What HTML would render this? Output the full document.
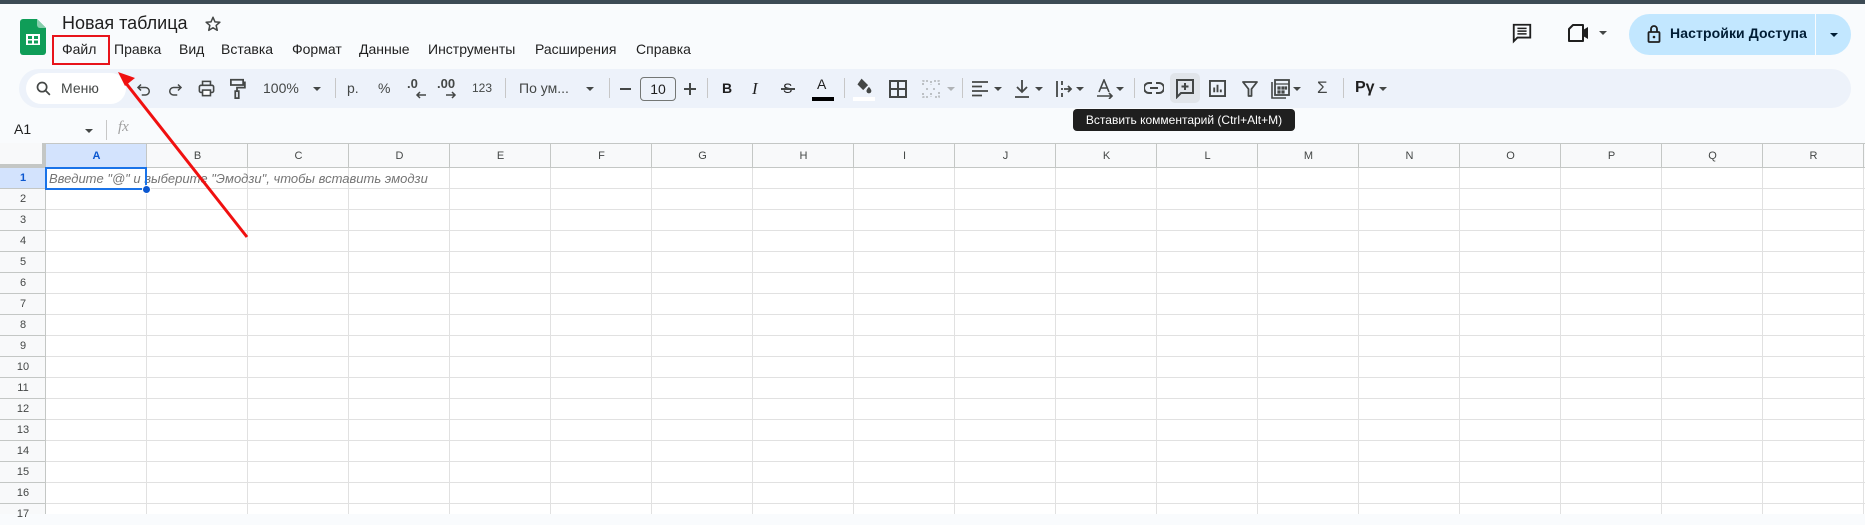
<!DOCTYPE html>
<html><head><meta charset="utf-8">
<style>
*{margin:0;padding:0;box-sizing:border-box}
body{width:1865px;height:514px;overflow:hidden;background:#f9fbfd;font-family:"Liberation Sans",Arial,sans-serif;color:#1f1f1f;position:relative}
.a{position:absolute}
.t{position:absolute;white-space:nowrap}
.menu{font-size:14px;top:41px;color:#1f1f1f}
.tb{font-size:14px;color:#444746}
svg.i{position:absolute}
.car{position:absolute;width:0;height:0;border-left:4px solid transparent;border-right:4px solid transparent;border-top:4px solid #444746}
.sep{position:absolute;width:1px;height:20px;top:78px;background:#c7c7c7}
.ch{position:absolute;top:144px;height:24px;line-height:24px;width:101px;text-align:center;font-size:11px;color:#444746}
.rh{position:absolute;left:0;width:46px;height:21px;line-height:21px;text-align:center;font-size:11px;color:#444746}
</style></head><body>
<div class="a" style="left:0;top:0;width:1865px;height:4px;background:#3d4b55"></div>

<!-- logo -->
<svg class="i" style="left:20px;top:19px" width="26" height="36" viewBox="0 0 26 36">
<path d="M3 0h14l9 9v24a3 3 0 0 1-3 3H3a3 3 0 0 1-3-3V3a3 3 0 0 1 3-3z" fill="#0f9d58"/>
<path d="M17 0l9 9h-6a3 3 0 0 1-3-3z" fill="#87ceac"/>
<rect x="6" y="15" width="14" height="11" fill="#fff"/>
<rect x="8" y="17" width="4" height="3" fill="#0f9d58"/><rect x="14" y="17" width="4" height="3" fill="#0f9d58"/>
<rect x="8" y="21.5" width="4" height="3" fill="#0f9d58"/><rect x="14" y="21.5" width="4" height="3" fill="#0f9d58"/>
</svg>
<div class="t" style="left:62px;top:13px;font-size:18px;color:#1f1f1f">Новая таблица</div>
<svg class="i" style="left:204px;top:15px" width="18" height="18" viewBox="0 0 24 24"><path d="M12 3l2.6 6.1 6.6.5-5 4.3 1.5 6.5L12 17l-5.7 3.4 1.5-6.5-5-4.3 6.6-.5z" fill="none" stroke="#444746" stroke-width="2" stroke-linejoin="round"/></svg>

<div class="t menu" style="left:62px">Файл</div>
<div class="t menu" style="left:114px">Правка</div>
<div class="t menu" style="left:179px">Вид</div>
<div class="t menu" style="left:221px">Вставка</div>
<div class="t menu" style="left:292px">Формат</div>
<div class="t menu" style="left:359px">Данные</div>
<div class="t menu" style="left:428px">Инструменты</div>
<div class="t menu" style="left:535px">Расширения</div>
<div class="t menu" style="left:636px">Справка</div>
<div class="a" style="left:52px;top:35px;width:58px;height:30px;border:2px solid #e8141b"></div>

<!-- right top -->
<svg class="i" style="left:1511px;top:22px" width="22" height="22" viewBox="0 0 24 24"><path d="M3 3h18v14H7l-4 4z" fill="none" stroke="#1f1f1f" stroke-width="2"/><path d="M7 7h10M7 10h10M7 13h10" stroke="#1f1f1f" stroke-width="1.6"/></svg>
<svg class="i" style="left:1567px;top:23px" width="24" height="20" viewBox="0 0 24 20"><path d="M6 2h10v16H2V6z" fill="none" stroke="#1f1f1f" stroke-width="2" stroke-linejoin="round"/><path d="M16 7l5-3v12l-5-3z" fill="#1f1f1f"/></svg>
<div class="car" style="left:1599px;top:31px"></div>
<div class="a" style="left:1629px;top:14px;width:222px;height:41px;border-radius:21px;background:#c2e7ff"></div>
<div class="a" style="left:1815px;top:14px;width:1px;height:41px;background:#f9fbfd"></div>
<svg class="i" style="left:1647px;top:24px" width="14" height="20" viewBox="0 0 14 20"><rect x="1.5" y="8" width="11" height="10" rx="1" fill="none" stroke="#1f1f1f" stroke-width="1.8"/><path d="M4 8V5a3 3 0 0 1 6 0v3" fill="none" stroke="#1f1f1f" stroke-width="1.8"/><circle cx="7" cy="13" r="1.3" fill="#1f1f1f"/></svg>
<div class="t" style="left:1670px;top:25px;font-size:14px;font-weight:bold;color:#001d35;letter-spacing:0.1px">Настройки Доступа</div>
<div class="car" style="left:1830px;top:33px;border-top-color:#001d35"></div>

<!-- toolbar -->
<div class="a" style="left:19px;top:69px;width:1832px;height:39px;border-radius:20px;background:#edf2fa"></div>
<div class="a" style="left:26px;top:73px;width:100px;height:31px;border-radius:16px;background:#fff"></div>
<svg class="i" style="left:35px;top:80px" width="17" height="17" viewBox="0 0 24 24"><circle cx="10" cy="10" r="6.5" fill="none" stroke="#444746" stroke-width="2.4"/><path d="M15 15l6 6" stroke="#444746" stroke-width="2.4"/></svg>
<div class="t tb" style="left:61px;top:80px">Меню</div>
<svg class="i" style="left:135px;top:80px" width="18" height="18" viewBox="0 0 24 24"><path d="M8 6L4 10l4 4" fill="none" stroke="#444746" stroke-width="2"/><path d="M4 10h10a5 5 0 0 1 0 10H9" fill="none" stroke="#444746" stroke-width="2"/></svg>
<svg class="i" style="left:166px;top:80px" width="18" height="18" viewBox="0 0 24 24"><path d="M16 6l4 4-4 4" fill="none" stroke="#444746" stroke-width="2"/><path d="M20 10H10a5 5 0 0 0 0 10h5" fill="none" stroke="#444746" stroke-width="2"/></svg>
<svg class="i" style="left:197px;top:79px" width="19" height="19" viewBox="0 0 24 24"><path d="M7 8V3h10v5" fill="none" stroke="#444746" stroke-width="2"/><rect x="3" y="8" width="18" height="9" rx="2" fill="none" stroke="#444746" stroke-width="2"/><rect x="7" y="14" width="10" height="7" fill="#fff" stroke="#444746" stroke-width="2"/></svg>
<svg class="i" style="left:228px;top:78px" width="18" height="21" viewBox="0 0 20 24"><rect x="3" y="2" width="14" height="6" fill="none" stroke="#444746" stroke-width="2"/><path d="M17 5h2v6h-9v4" fill="none" stroke="#444746" stroke-width="2"/><rect x="8" y="15" width="4" height="8" fill="none" stroke="#444746" stroke-width="2"/></svg>
<div class="t tb" style="left:263px;top:80px">100%</div>
<div class="car" style="left:313px;top:87px"></div>
<div class="sep" style="left:335px"></div>
<div class="t tb" style="left:347px;top:80px">р.</div>
<div class="t tb" style="left:378px;top:80px">%</div>
<div class="t tb" style="left:407px;top:76px;font-size:13px;font-weight:bold">.0</div>
<svg class="i" style="left:415px;top:91px" width="12" height="8" viewBox="0 0 12 8"><path d="M11 4H2M5 1L2 4l3 3" fill="none" stroke="#444746" stroke-width="1.5"/></svg>
<div class="t tb" style="left:437px;top:76px;font-size:13px;font-weight:bold">.00</div>
<svg class="i" style="left:445px;top:91px" width="12" height="8" viewBox="0 0 12 8"><path d="M1 4h9M7 1l3 3-3 3" fill="none" stroke="#444746" stroke-width="1.5"/></svg>
<div class="t tb" style="left:472px;top:81px;font-size:12px">123</div>
<div class="sep" style="left:505px"></div>
<div class="t tb" style="left:519px;top:80px">По ум...</div>
<div class="car" style="left:586px;top:87px"></div>
<div class="sep" style="left:609px"></div>
<div class="a" style="left:620px;top:88px;width:11px;height:2px;background:#444746"></div>
<div class="a" style="left:640px;top:77px;width:36px;height:24px;border:1px solid #747775;border-radius:4px;font-size:14px;text-align:center;line-height:22px;color:#1f1f1f">10</div>
<div class="a" style="left:684px;top:88px;width:12px;height:2px;background:#444746"></div>
<div class="a" style="left:689px;top:83px;width:2px;height:12px;background:#444746"></div>
<div class="sep" style="left:707px"></div>
<div class="t tb" style="left:722px;top:80px;font-weight:bold;color:#1f1f1f">B</div>
<div class="t tb" style="left:752px;top:79px;font-style:italic;font-family:'Liberation Serif',serif;font-size:17px;color:#1f1f1f">I</div>
<div class="t tb" style="left:783px;top:80px;color:#1f1f1f">S</div>
<div class="a" style="left:781px;top:88px;width:14px;height:1.5px;background:#444746"></div>
<div class="t tb" style="left:817px;top:76px;font-size:14px;color:#1f1f1f">A</div>
<div class="a" style="left:812px;top:97px;width:22px;height:4px;background:#000"></div>
<div class="sep" style="left:844px"></div>
<svg class="i" style="left:854px;top:77px" width="20" height="18" viewBox="0 0 24 22"><path d="M9 2l8 8-6 6-7-7z" fill="#444746"/><path d="M18 12s3 3 3 5a3 3 0 0 1-6 0c0-2 3-5 3-5z" fill="#444746"/></svg>
<div class="a" style="left:853px;top:97px;width:22px;height:4px;background:#fff"></div>
<svg class="i" style="left:889px;top:80px" width="18" height="18" viewBox="0 0 18 18"><path d="M1 1h16v16H1zM9 1v16M1 9h16" fill="none" stroke="#444746" stroke-width="2"/></svg>
<svg class="i" style="left:922px;top:80px" width="18" height="18" viewBox="0 0 18 18"><path d="M1 5V1h5M12 1h5v4M17 12v5h-5M6 17H1v-5M9 1v4M9 13v4M4 9h3M11 9h3" fill="none" stroke="#b0b3b6" stroke-width="1.6" stroke-dasharray="2 1.5"/></svg>
<div class="car" style="left:947px;top:87px;border-top-color:#b0b3b6"></div>
<div class="sep" style="left:962px"></div>
<svg class="i" style="left:972px;top:81px" width="16" height="16" viewBox="0 0 16 16"><path d="M0 1h16M0 5.5h10M0 10h16M0 14.5h10" stroke="#444746" stroke-width="1.7"/></svg>
<div class="car" style="left:994px;top:87px"></div>
<svg class="i" style="left:1014px;top:79px" width="16" height="20" viewBox="0 0 16 20"><path d="M8 1v12M3 8l5 5 5-5M1 18h14" fill="none" stroke="#444746" stroke-width="1.8"/></svg>
<div class="car" style="left:1035px;top:87px"></div>
<svg class="i" style="left:1055px;top:80px" width="18" height="18" viewBox="0 0 18 18"><path d="M2 1v16M7 1v4M7 8v2M7 13v4M9 9h7M13 6l3 3-3 3" fill="none" stroke="#444746" stroke-width="1.8"/></svg>
<div class="car" style="left:1076px;top:87px"></div>
<svg class="i" style="left:1096px;top:79px" width="18" height="20" viewBox="0 0 18 20"><path d="M3 13L8 1l5 12M5 9h6M1 17h14M13 14l3 3-3 3" fill="none" stroke="#444746" stroke-width="1.6"/></svg>
<div class="car" style="left:1116px;top:87px"></div>
<div class="sep" style="left:1134px"></div>
<svg class="i" style="left:1144px;top:82px" width="20" height="12" viewBox="0 0 20 12"><path d="M8 1H5a5 5 0 0 0 0 10h3M12 1h3a5 5 0 0 1 0 10h-3M6 6h8" fill="none" stroke="#444746" stroke-width="2"/></svg>
<div class="a" style="left:1170px;top:73px;width:30px;height:30px;border-radius:5px;background:#e1e5ea"></div>
<svg class="i" style="left:1176px;top:79px" width="18" height="20" viewBox="0 0 18 20"><path d="M1 1h16v13H5l-4 4z" fill="none" stroke="#444746" stroke-width="2"/><path d="M9 4v7M5.5 7.5h7" stroke="#444746" stroke-width="2"/></svg>
<svg class="i" style="left:1209px;top:80px" width="17" height="17" viewBox="0 0 18 18"><rect x="1" y="1" width="16" height="16" fill="none" stroke="#444746" stroke-width="2"/><path d="M5.5 13V8M9 13V5M12.5 13v-3" stroke="#444746" stroke-width="2"/></svg>
<svg class="i" style="left:1242px;top:81px" width="16" height="16" viewBox="0 0 16 16"><path d="M1 1h14l-5.5 7v7h-3V8z" fill="none" stroke="#444746" stroke-width="1.8" stroke-linejoin="round"/></svg>
<svg class="i" style="left:1270px;top:79px" width="20" height="20" viewBox="0 0 20 20"><path d="M2 3v16h14" fill="none" stroke="#444746" stroke-width="1.6"/><rect x="5" y="1" width="14" height="15" fill="none" stroke="#444746" stroke-width="1.8"/><path d="M5 5h14M8 8h2v2H8zM12 8h2v2h-2zM15.5 8h1v2h-1zM8 12h2v2H8zM12 12h2v2h-2z" stroke="#444746" stroke-width="1.2" fill="#444746"/></svg>
<div class="car" style="left:1293px;top:87px"></div>
<div class="t tb" style="left:1317px;top:78px;font-size:17px">Σ</div>
<div class="sep" style="left:1343px"></div>
<div class="t tb" style="left:1355px;top:79px;font-size:16px;font-weight:bold;color:#1f1f1f">Pγ</div>
<div class="car" style="left:1379px;top:87px"></div>

<!-- tooltip -->
<div class="a" style="left:1073px;top:109px;width:222px;height:22px;border-radius:4px;background:#1f1f1f;color:#fff;font-size:12px;line-height:22px;text-align:center;white-space:nowrap">Вставить комментарий (Ctrl+Alt+M)</div>

<!-- name box / formula -->
<div class="t" style="left:14px;top:121px;font-size:14px;color:#1f1f1f">A1</div>
<div class="car" style="left:85px;top:129px"></div>
<div class="a" style="left:106px;top:120px;width:1px;height:20px;background:#c7c7c7"></div>
<div class="t" style="left:118px;top:119px;font-size:15px;font-style:italic;font-family:'Liberation Serif',serif;color:#a0a0a0">fx</div>

<!-- grid -->
<div class="a" style="left:0;top:143px;width:1865px;height:371px;background:#fff"></div>
<div class="a" style="left:46px;top:168px;width:1819px;height:346px;background:
repeating-linear-gradient(to bottom,transparent 0,transparent 20px,#e1e1e1 20px,#e1e1e1 21px),
repeating-linear-gradient(to right,transparent 0,transparent 100px,#e1e1e1 100px,#e1e1e1 101px)"></div>
<div class="a" style="left:0;top:143px;width:1865px;height:25px;background:#f8f9fa;border-top:1px solid #c4c7c5;border-bottom:1px solid #c4c7c5"></div>
<div class="a" style="left:0;top:143px;width:46px;height:371px;background:#f8f9fa;border-right:1px solid #c4c7c5"></div>
<div class="a" style="left:0;top:143px;width:46px;height:25px;background:#f8f9fa;border-right:4px solid #c4c7c5;border-bottom:4px solid #c4c7c5"></div>
<div class="a" style="left:46px;top:144px;width:101px;height:23px;background:#d3e3fd"></div>
<div class="a" style="left:0;top:168px;width:45px;height:20px;background:#d3e3fd"></div>
<div class="a" style="left:46px;top:144px;width:1819px;height:24px;background:repeating-linear-gradient(to right,transparent 0,transparent 100px,#c4c7c5 100px,#c4c7c5 101px)"></div>
<div class="a" style="left:0;top:168px;width:46px;height:346px;background:repeating-linear-gradient(to bottom,transparent 0,transparent 20px,#c4c7c5 20px,#c4c7c5 21px)"></div>

<div class="ch" style="left:46px;font-weight:bold;color:#0b57d0">A</div>
<div class="ch" style="left:147px">B</div><div class="ch" style="left:248px">C</div><div class="ch" style="left:349px">D</div>
<div class="ch" style="left:450px">E</div><div class="ch" style="left:551px">F</div><div class="ch" style="left:652px">G</div>
<div class="ch" style="left:753px">H</div><div class="ch" style="left:854px">I</div><div class="ch" style="left:955px">J</div>
<div class="ch" style="left:1056px">K</div><div class="ch" style="left:1157px">L</div><div class="ch" style="left:1258px">M</div>
<div class="ch" style="left:1359px">N</div><div class="ch" style="left:1460px">O</div><div class="ch" style="left:1561px">P</div>
<div class="ch" style="left:1662px">Q</div><div class="ch" style="left:1763px">R</div>

<div class="rh" style="top:168px;font-weight:bold;color:#0b57d0">1</div>
<div class="rh" style="top:189px">2</div><div class="rh" style="top:210px">3</div><div class="rh" style="top:231px">4</div>
<div class="rh" style="top:252px">5</div><div class="rh" style="top:273px">6</div><div class="rh" style="top:294px">7</div>
<div class="rh" style="top:315px">8</div><div class="rh" style="top:336px">9</div><div class="rh" style="top:357px">10</div>
<div class="rh" style="top:378px">11</div><div class="rh" style="top:399px">12</div><div class="rh" style="top:420px">13</div>
<div class="rh" style="top:441px">14</div><div class="rh" style="top:462px">15</div><div class="rh" style="top:483px">16</div>
<div class="rh" style="top:504px">17</div>

<div class="t" style="left:49px;top:171px;font-size:13px;font-style:italic;color:#757575">Введите "@" и выберите "Эмодзи", чтобы вставить эмодзи</div>
<div class="a" style="left:45px;top:167px;width:102px;height:23px;border:2px solid #1a73e8"></div>
<div class="a" style="left:142px;top:185px;width:9px;height:9px;border-radius:50%;background:#0b57d0;border:1px solid #fff"></div>

<!-- arrow -->
<svg class="i" style="left:0;top:0" width="300" height="260" viewBox="0 0 300 260">
<path d="M247 237L125 82" stroke="#f01010" stroke-width="3"/>
<path d="M118 72l17 6-10 8z" fill="#f01010"/>
</svg>
</body></html>
